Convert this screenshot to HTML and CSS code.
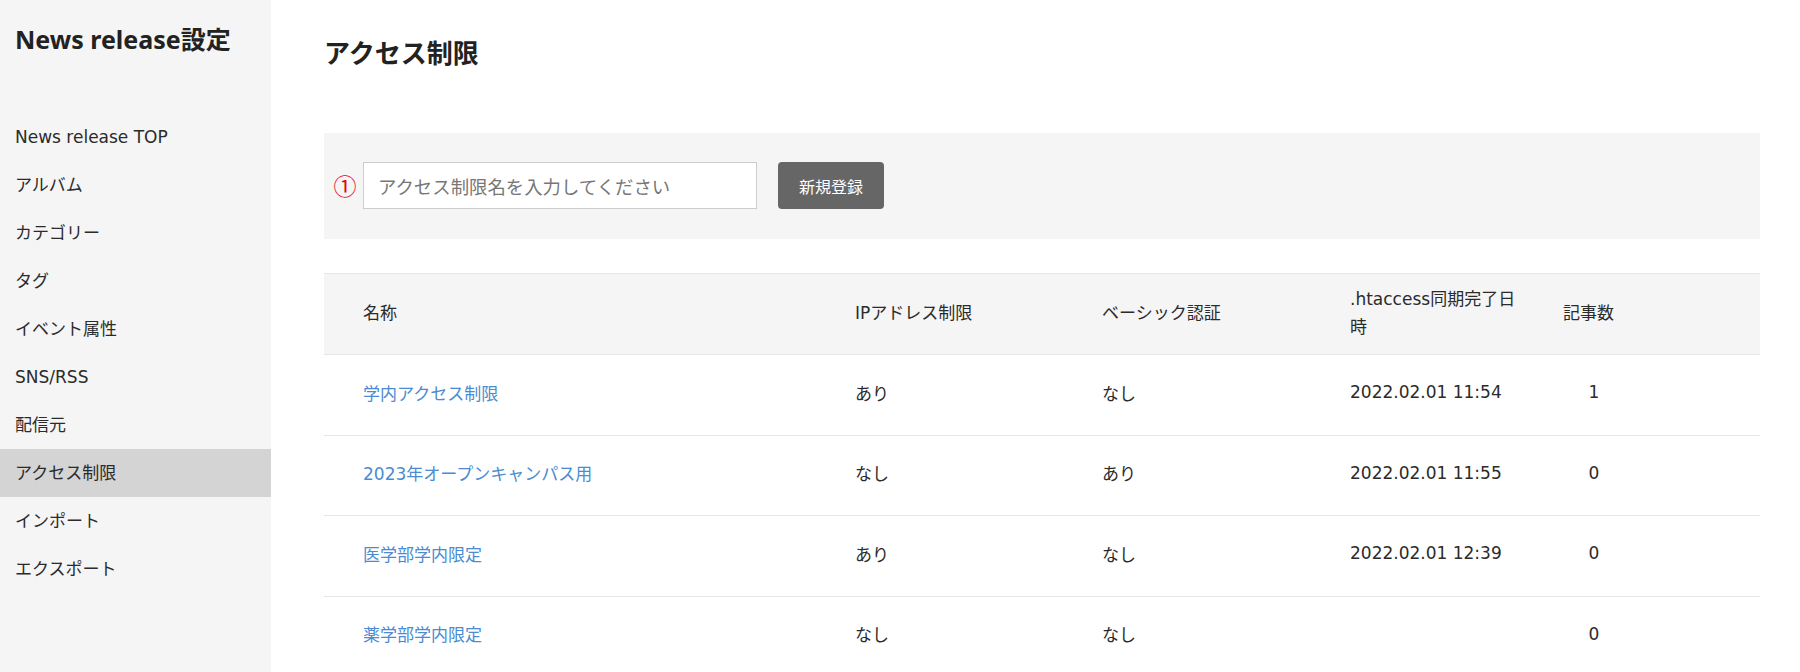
FILE: index.html
```html
<!DOCTYPE html>
<html lang="ja">
<head>
<meta charset="utf-8">
<title>アクセス制限</title>
<link rel="stylesheet" href="styles.css">
</head>
<body>
<div class="layout">
  <aside class="sidebar">
    <h2 class="sidebar-title">News release設定</h2>
    <ul class="nav">
      <li class="nav-item">News release TOP</li>
      <li class="nav-item">アルバム</li>
      <li class="nav-item">カテゴリー</li>
      <li class="nav-item">タグ</li>
      <li class="nav-item">イベント属性</li>
      <li class="nav-item">SNS/RSS</li>
      <li class="nav-item">配信元</li>
      <li class="nav-item active">アクセス制限</li>
      <li class="nav-item">インポート</li>
      <li class="nav-item">エクスポート</li>
    </ul>
  </aside>
  <main class="main">
    <h1 class="page-title">アクセス制限</h1>
    <div class="form-box">
      <span class="marker">①</span>
      <input class="name-input" type="text" placeholder="アクセス制限名を入力してください">
      <button class="btn-register" type="button">新規登録</button>
    </div>
    <table class="list">
      <colgroup>
        <col class="c-name">
        <col class="c-ip">
        <col class="c-basic">
        <col class="c-sync">
        <col class="c-count">
        <col class="c-rest">
      </colgroup>
      <thead>
        <tr>
          <th class="first">名称</th>
          <th>IPアドレス制限</th>
          <th>ベーシック認証</th>
          <th class="sync">.htaccess同期完了日<br>時</th>
          <th class="count-head">記事数</th>
          <th></th>
        </tr>
      </thead>
      <tbody>
        <tr>
          <td class="first"><a class="link" href="#">学内アクセス制限</a></td>
          <td>あり</td>
          <td>なし</td>
          <td class="sync">2022.02.01 11:54</td>
          <td class="count">1</td>
          <td></td>
        </tr>
        <tr>
          <td class="first"><a class="link" href="#">2023年オープンキャンパス用</a></td>
          <td>なし</td>
          <td>あり</td>
          <td class="sync">2022.02.01 11:55</td>
          <td class="count">0</td>
          <td></td>
        </tr>
        <tr>
          <td class="first"><a class="link" href="#">医学部学内限定</a></td>
          <td>あり</td>
          <td>なし</td>
          <td class="sync">2022.02.01 12:39</td>
          <td class="count">0</td>
          <td></td>
        </tr>
        <tr>
          <td class="first"><a class="link" href="#">薬学部学内限定</a></td>
          <td>なし</td>
          <td>なし</td>
          <td class="sync"></td>
          <td class="count">0</td>
          <td></td>
        </tr>
      </tbody>
    </table>
  </main>
</div>
</body>
</html>
```

FILE: styles.css
```css
* { box-sizing: border-box; }

html, body {
  margin: 0;
  padding: 0;
  background: #ffffff;
  color: #2b2b2b;
  font-family: "DejaVu Sans", "Noto Sans CJK JP", sans-serif;
  font-size: 17px;
}

.layout {
  display: flex;
  min-height: 100vh;
}

.sidebar {
  width: 271px;
  flex: 0 0 271px;
  background: #f5f5f5;
  min-height: 100vh;
}

.sidebar-title {
  margin: 0;
  padding: 22px 0 0 15px;
  font-family: "Noto Sans", "Noto Sans CJK JP", sans-serif;
  font-size: 25px;
  line-height: 34px;
  font-weight: 700;
  color: #222222;
}

.nav {
  list-style: none;
  margin: 57px 0 0 0;
  padding: 0;
}

.nav-item {
  height: 48px;
  line-height: 48px;
  padding-left: 15px;
  font-size: 17px;
  color: #2b2b2b;
}

.nav-item.active {
  background: #d4d4d4;
}

.main {
  flex: 1;
  padding: 32px 40px 0 53px;
  min-width: 0;
}

.page-title {
  margin: 0;
  font-family: "Noto Sans CJK JP", sans-serif;
  font-size: 26px;
  line-height: 39px;
  font-weight: 700;
  color: #222222;
}

.form-box {
  margin-top: 62px;
  background: #f5f5f5;
  padding: 29px 0 30px 9px;
  display: flex;
  align-items: center;
}

.marker {
  width: 24px;
  margin-right: 6px;
  color: #e60012;
  font-family: "Noto Sans CJK JP", sans-serif;
  font-size: 23px;
  line-height: 1;
  text-align: center;
}

.name-input {
  width: 394px;
  height: 47px;
  border: 1px solid #cccccc;
  background: #ffffff;
  padding: 0 14px;
  font-family: "Noto Sans CJK JP", sans-serif;
  font-size: 18.4px;
  color: #333333;
  outline: none;
}

.name-input::placeholder {
  color: #777777;
}

.btn-register {
  margin-left: 21px;
  width: 106px;
  height: 47px;
  border: none;
  border-radius: 4px;
  background: #666666;
  color: #ffffff;
  font-family: "Noto Sans CJK JP", sans-serif;
  font-size: 16px;
  cursor: pointer;
}

.list {
  margin-top: 34px;
  width: 100%;
  border-collapse: collapse;
  table-layout: fixed;
}

.c-name { width: 521px; }
.c-ip { width: 247px; }
.c-basic { width: 248px; }
.c-sync { width: 213px; }
.c-count { width: 82px; }
.c-rest { width: auto; }

.list th,
.list td {
  padding: 0 10px;
  text-align: left;
  vertical-align: middle;
  font-weight: 400;
  font-size: 17px;
  color: #2b2b2b;
}

.list thead tr {
  background: #f5f5f5;
  border-top: 1px solid #e6e6e6;
  border-bottom: 1px solid #e6e6e6;
}

.list th {
  height: 81px;
  line-height: 28px;
  padding-bottom: 3px;
}

.list td {
  height: 80.5px;
  border-bottom: 1px solid #e6e6e6;
  padding-bottom: 5px;
}

.list .first {
  padding-left: 39px;
}

.list .count {
  text-align: center;
}

.link {
  color: #4b8bd1;
  text-decoration: none;
}
```
